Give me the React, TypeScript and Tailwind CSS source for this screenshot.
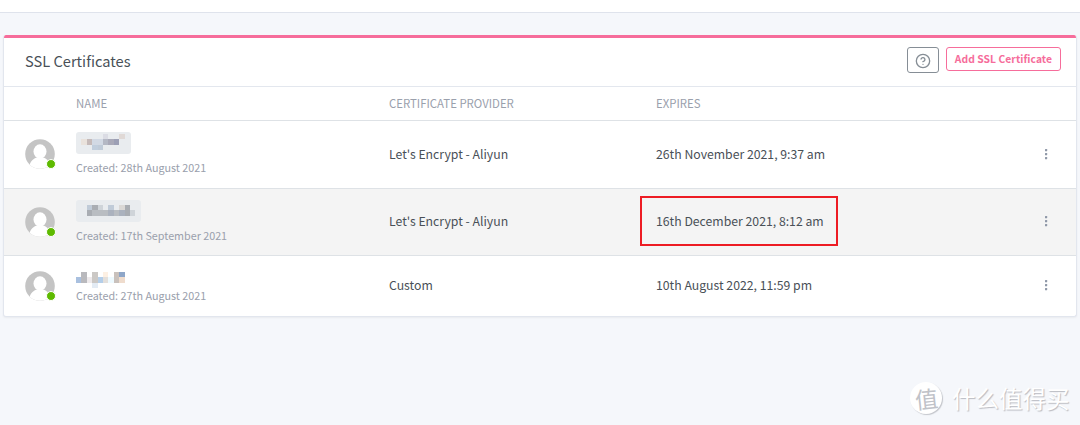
import { clsx } from 'clsx';

interface Pixel {
  x: number;
  y: number;
  fill: string;
}

interface Certificate {
  id: number;
  created: string;
  provider: string;
  expires: string;
  boxed: boolean;
  rowClass: string;
  nameClass: string;
  boxClass: string;
  mosaicClass: string;
  highlighted?: boolean;
  pixels: Pixel[];
}

const CELL = 5.4;

// Each letter is one colour of the censored domain name, a dot is an empty cell.
const palette: Record<string, string> = {
  a: '#e9e2dc',
  b: '#c5bab9',
  c: '#d2d9e4',
  d: '#dbdce4',
  e: '#a9a9b8',
  f: '#9c9fb5',
  g: '#b4b8c4',
  h: '#c1cedd',
  i: '#e0d9d6',
  k: '#a9adb3',
  l: '#b9bdc2',
  m: '#cfd4d9',
  n: '#c0cbd8',
  o: '#abb2be',
  p: '#dad8d6',
  q: '#a9c0df',
  r: '#b9b9bd',
  s: '#eeeaec',
  t: '#cbc8c5',
  u: '#b4cee9',
  v: '#fdf0e3',
  w: '#e3dfdb',
  x: '#c9c1bc',
  y: '#8ea6c8',
  z: '#efdccd',
  '1': '#eefaff',
  '2': '#e3ebf4',
};

function mosaic(rows: string[]): Pixel[] {
  return rows.flatMap((row, y) =>
    [...row].flatMap((char, x) => (char === '.' ? [] : [{ x, y, fill: palette[char] }])),
  );
}

const certificates: Certificate[] = [
  {
    id: 1,
    created: '28th August 2021',
    provider: "Let's Encrypt - Aliyun",
    expires: '26th November 2021, 9:37 am',
    boxed: true,
    rowClass: 'h-[68px] pb-px',
    nameClass: 'pb-[2px]',
    boxClass: 'w-[55px]',
    mosaicClass: 'top-[2px]',
    pixels: mosaic(['.....d..i.', '.abccgef..', '...hn.....']),
  },
  {
    id: 2,
    created: '17th September 2021',
    provider: "Let's Encrypt - Aliyun",
    expires: '16th December 2021, 8:12 am',
    boxed: true,
    rowClass: 'h-[67px] pb-px',
    nameClass: '',
    boxClass: 'w-[65px]',
    mosaicClass: 'top-[5px]',
    highlighted: true,
    pixels: mosaic(['..nkm.n.pk..', '..klllolokm.']),
  },
  {
    id: 3,
    created: '27th August 2021',
    provider: 'Custom',
    expires: '10th August 2022, 11:59 pm',
    boxed: false,
    rowClass: 'h-[60px] pb-px',
    nameClass: 'pt-[2px]',
    boxClass: 'w-[55px]',
    mosaicClass: 'top-[2px]',
    pixels: mosaic(['.r.t.v.xy', 'qrstuw1xz', '...2.....']),
  },
];

function Mosaic({ pixels, className }: { pixels: Pixel[]; className?: string }) {
  return (
    <svg width="65" height="17" className={clsx('absolute left-0', className)} shapeRendering="crispEdges">
      {pixels.map(({ x, y, fill }) => (
        <rect key={`${x}-${y}`} x={x * CELL} y={y * CELL} width={CELL} height={CELL} fill={fill} />
      ))}
    </svg>
  );
}

function Avatar() {
  return (
    <div className="relative size-[30px] shrink-0">
      <svg viewBox="0 0 30 30" className="size-[30px]">
        <defs>
          <clipPath id="avatar">
            <circle cx="15" cy="15" r="14.8" />
          </clipPath>
        </defs>
        <g clipPath="url(#avatar)">
          <rect width="30" height="30" fill="#c4c4c4" />
          <ellipse cx="15" cy="12.5" rx="6.5" ry="7.2" fill="#fff" />
          <path d="M3.5 30C4.5 23.5 7 20.5 11.5 18.5h7c4.5 2 7 5 8 11.5z" fill="#fff" />
        </g>
      </svg>
      <span className="absolute top-[20px] left-[20.5px] size-[10px] rounded-full border border-white bg-[#5eba00]" />
    </div>
  );
}

function DotsIcon() {
  return (
    <svg width="4" height="12" fill="#8f98a8">
      <rect x="1" y="1" width="2.2" height="2.2" rx=".5" />
      <rect x="1" y="5" width="2.2" height="2.2" rx=".5" />
      <rect x="1" y="9" width="2.2" height="2.2" rx=".5" />
    </svg>
  );
}

function HelpIcon() {
  return (
    <svg
      width="16"
      height="16"
      viewBox="0 0 24 24"
      fill="none"
      stroke="#868e96"
      strokeWidth="2"
      strokeLinecap="round"
      strokeLinejoin="round"
    >
      <circle cx="12" cy="12" r="10" />
      <path d="M9.09 9a3 3 0 0 1 5.83 1c0 2-3 3-3 3" />
      <path d="M12 17h.01" />
    </svg>
  );
}

function CertificateRow({ certificate }: { certificate: Certificate }) {
  const { boxed, boxClass, created, expires, highlighted, mosaicClass, nameClass, pixels, provider, rowClass } =
    certificate;

  return (
    <div
      className={clsx(
        'grid grid-cols-[72px_313px_267px_1fr_60px] items-center border-b border-[#dee2e6] text-[12.25px] text-[#495057] last:border-b-0',
        rowClass,
        highlighted && 'bg-[#f4f4f4]',
      )}
    >
      <div className="pl-[21px]">
        <Avatar />
      </div>
      <div className={nameClass}>
        <div className={clsx('relative', boxClass, boxed ? 'h-[22px] rounded-[3px] bg-[#e9ecef]' : 'h-[13px]')}>
          <Mosaic pixels={pixels} className={mosaicClass} />
        </div>
        <div className={clsx('text-[10.75px] leading-[14px] text-[#9aa0ac]', boxed ? 'mt-[7px]' : 'mt-[6px]')}>
          Created: {created}
        </div>
      </div>
      <div className={clsx('leading-5', certificate.id > 1 && 'pb-[2px]')}>{provider}</div>
      <div className={clsx('relative leading-5', certificate.id > 1 && 'pb-[2px]')}>
        {expires}
        {highlighted && (
          <div className="absolute -top-[15px] -left-[16px] h-[50px] w-[198px] border-2 border-[#ed1c24]" />
        )}
      </div>
      <button className={clsx('justify-self-start pl-[28px]', certificate.id > 1 && 'pb-[2px]')} aria-label="Actions">
        <DotsIcon />
      </button>
    </div>
  );
}

export default function App() {
  return (
    <div className="relative h-[425px] overflow-hidden bg-[#f5f7fb] font-['Noto_Sans_CJK_SC',sans-serif]">
      <div className="h-[13px] border-b border-[#dfe3ec] bg-white" />

      <div className="mt-[22px] mr-[3px] ml-[3px] overflow-hidden rounded-[3px] border border-t-0 border-[#e2e6ee] bg-white shadow-[0_1px_2px_0_rgba(0,0,0,0.05)]">
        <div className="h-[3px] bg-[#f66d9b]" />
        <div className="flex h-[49px] items-center border-b border-[#e3e7ee] pr-[15px] pl-[21px]">
          <h3 className="mb-[3px] flex-1 text-[14.65px] leading-6 text-[#495057]">SSL Certificates</h3>
          <button
            className="mr-[7px] mb-[5px] flex h-[26px] w-[32px] items-center justify-center rounded-[3px] border border-[#868e96] pt-[2px]"
            aria-label="Help"
          >
            <HelpIcon />
          </button>
          <button className="mb-[7px] h-[24px] w-[115px] rounded-[3px] border border-[#f66d9b] text-[10.3px] leading-[22px] font-bold tracking-[0.06px] whitespace-nowrap text-[#f66d9b]">
            Add SSL Certificate
          </button>
        </div>
        <div className="grid h-[34px] grid-cols-[72px_313px_267px_1fr] items-center border-b border-[#dee2e6] pb-[2px] text-[11.4px] leading-5 text-[#9aa0ac]">
          <div />
          <div>NAME</div>
          <div>CERTIFICATE PROVIDER</div>
          <div>EXPIRES</div>
        </div>
        {certificates.map((certificate) => (
          <CertificateRow key={certificate.id} certificate={certificate} />
        ))}
      </div>

      <div className="absolute top-[382px] left-[910px] flex items-center gap-[10px]">
        <div className="flex size-[32px] items-center justify-center rounded-full bg-white text-[23px] leading-none text-[#c0c2c8] shadow-[1px_1px_1px_#c3c5cb]">
          <span className="-rotate-6">值</span>
        </div>
        <div className="text-[23.5px] leading-8 text-white [text-shadow:1px_1px_1px_#b9bbc1]">什么值得买</div>
      </div>
    </div>
  );
}
